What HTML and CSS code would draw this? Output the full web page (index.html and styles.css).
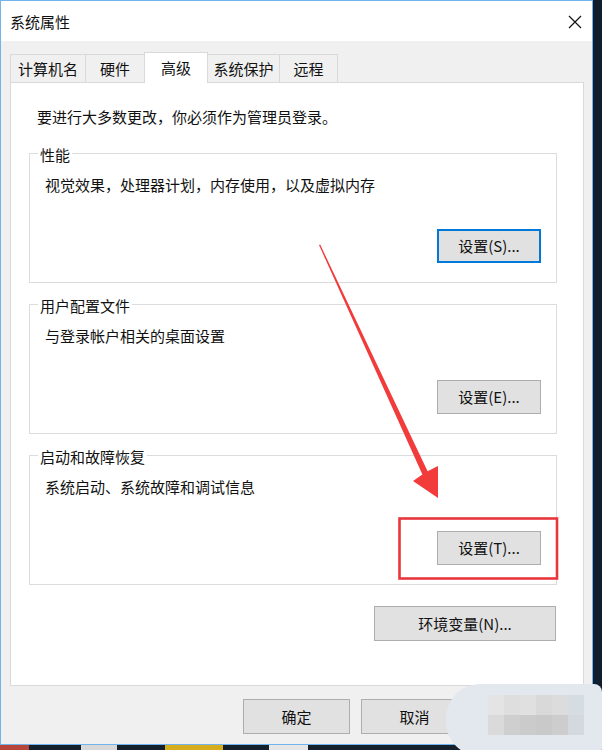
FILE: index.html
```html
<!DOCTYPE html>
<html lang="zh-CN">
<head>
<meta charset="utf-8">
<title>系统属性</title>
<link rel="stylesheet" href="styles.css">
</head>
<body>
<div class="screen">
  <div class="main">
    <div class="window">
      <div class="titlebar">
        <span class="title">系统属性</span>
        <svg class="close" width="14" height="14" viewBox="0 0 14 14"><path d="M1 1 L13 13 M13 1 L1 13" stroke="#111" stroke-width="1.2" fill="none"/></svg>
      </div>
      <div class="client">
        <div class="tabs">
          <div class="tab w1">计算机名</div>
          <div class="tab w2">硬件</div>
          <div class="tab w3 selected">高级</div>
          <div class="tab w4">系统保护</div>
          <div class="tab w5">远程</div>
        </div>
        <div class="panel">
          <p class="note">要进行大多数更改，你必须作为管理员登录。</p>
          <div class="group">
            <div class="legend">性能</div>
            <p class="desc">视觉效果，处理器计划，内存使用，以及虚拟内存</p>
            <div class="btn-row"><button class="btn focused">设置(S)...</button></div>
          </div>
          <div class="group">
            <div class="legend">用户配置文件</div>
            <p class="desc">与登录帐户相关的桌面设置</p>
            <div class="btn-row"><button class="btn">设置(E)...</button></div>
          </div>
          <div class="group">
            <div class="legend">启动和故障恢复</div>
            <p class="desc">系统启动、系统故障和调试信息</p>
            <div class="btn-row"><button class="btn">设置(T)...</button></div>
          </div>
          <div class="env-row"><button class="btn env">环境变量(N)...</button></div>
        </div>
        <div class="dialog-buttons">
          <button class="btn dlg">确定</button>
          <button class="btn dlg">取消</button>
          <button class="btn dlg">应用(A)</button>
        </div>
      </div>
    </div>
    <div class="edge"></div>
  </div>
  <div class="taskbar">
    <span class="tb red"></span>
    <span class="tb gap1"></span>
    <span class="tb white"></span>
    <span class="tb gap2"></span>
    <span class="tb yellow"></span>
    <span class="tb gap3"></span>
    <span class="tb white2"></span>
  </div>

  <div class="blob">
    <div class="mosaic">
      <span class="m1"></span><span class="m2"></span><span class="m3"></span><span class="m4"></span><span class="m5"></span><span class="m6"></span>
      <span class="m7"></span><span class="m8"></span><span class="m9"></span><span class="m10"></span><span class="m11"></span><span class="m12"></span>
    </div>
  </div>

  <svg class="annot" width="602" height="750" viewBox="0 0 602 750">
    <rect x="399.5" y="518.5" width="157.5" height="60" fill="none" stroke="#e8363c" stroke-width="2.6"/>
    <polygon points="319,245 320.2,244.6 427.6,471.3 438,466 438,498 413,481 422.4,474.6" fill="#f23c3c"/>
  </svg>
</div>
</body>
</html>
```

FILE: styles.css
```css
* { box-sizing: border-box; }
html, body { margin: 0; padding: 0; background: #0f1b28; }
body {
  font-family: "Microsoft YaHei", "Noto Sans CJK SC", "Noto Sans", sans-serif;
  color: #111;
  font-size: 15px;
}
.screen {
  position: relative;
  width: 602px;
  height: 750px;
  overflow: hidden;
  display: flex;
  flex-direction: column;
}
.main { display: flex; height: 745px; }
.window {
  width: 593px;
  height: 745px;
  border: 1px solid #71b3ea;
  display: flex;
  flex-direction: column;
  background: #f0f0f0;
}
.edge { flex: 1; background: #0f1d2c; }

.titlebar {
  height: 40px;
  background: #fff;
  display: flex;
  align-items: center;
  justify-content: space-between;
  padding: 1px 10px 0 9px;
}
.title { font-size: 15px; line-height: 20px; }
.close { display: block; }

.client {
  flex: 1;
  display: flex;
  flex-direction: column;
  padding: 11px 0 0 9px;
}
.tabs {
  display: flex;
  align-items: flex-end;
  height: 30px;
}
.tab {
  height: 28px;
  border: 1px solid #d9d9d9;
  border-bottom: none;
  margin-right: -1px;
  background: #f0f0f0;
  display: flex;
  align-items: center;
  justify-content: center;
  font-size: 15px;
  line-height: 20px;
  padding-top: 1px;
}
.tab.selected {
  height: 31px;
  background: #fff;
  margin-bottom: -1px;
  position: relative;
  z-index: 1;
  padding-top: 0;
  padding-bottom: 1px;
}
.w1 { width: 76px; }
.w2 { width: 60px; }
.w3 { width: 64px; }
.w4 { width: 73px; }
.w5 { width: 59px; }

.panel {
  width: 574px;
  height: 604px;
  background: #fff;
  border: 1px solid #d9d9d9;
  padding: 24px 26px 0 18px;
  display: flex;
  flex-direction: column;
}
.note {
  margin: 0 0 0 8px;
  line-height: 20px;
  font-size: 15px;
}
.group {
  margin-top: 21px;
  height: 130px;
  border: 1px solid #dcdcdc;
  padding: 0 15px 0 15px;
  display: flex;
  flex-direction: column;
}
.note + .group { margin-top: 26px; }
.legend {
  margin: -8px 0 0 -7px;
  padding: 0 2px;
  background: #fff;
  line-height: 18px;
  font-size: 15px;
  align-self: flex-start;
}
.desc {
  margin: 11px 0 0 0;
  line-height: 20px;
  font-size: 15px;
}
.btn-row {
  margin-top: 34px;
  display: flex;
  justify-content: flex-end;
}
.btn {
  font-family: "Microsoft YaHei", "Noto Sans CJK SC", "Noto Sans", sans-serif;
  font-size: 15px;
  color: #111;
  background: #e1e1e1;
  border: 1px solid #adadad;
  border-radius: 0;
  height: 34px;
  width: 104px;
  padding: 0;
  line-height: 20px;
}
.btn.focused { border: 2px solid #0078d7; }
.env-row {
  margin-top: 21px;
  display: flex;
  justify-content: flex-end;
  padding-right: 1px;
}
.btn.env { width: 182px; height: 35px; }

.dialog-buttons {
  display: flex;
  justify-content: flex-end;
  gap: 11px;
  margin-top: 13px;
  padding-right: 6px;
}
.btn.dlg { width: 107px; height: 35px; }

.taskbar {
  height: 5px;
  display: flex;
  background: #14202c;
}
.tb { display: block; height: 5px; }
.red { width: 29px; background: #b8453a; }
.gap1 { width: 52px; }
.white { width: 36px; background: #d8d8d8; }
.gap2 { width: 48px; }
.yellow { width: 58px; background: #d6ad1d; }
.gap3 { width: 46px; }
.white2 { width: 39px; background: #e6e6e6; }

.blob {
  position: absolute;
  left: 446px;
  top: 684px;
  width: 156px;
  height: 72px;
  border-radius: 34px 8px 8px 34px;
  background: #e2e8ed;
  padding: 11px 0 0 42px;
}
.mosaic {
  display: grid;
  grid-template-columns: repeat(6, 16px);
  grid-template-rows: 20px 20px;
}
.mosaic span { display: block; }
.m1 { background: #e4e4e4; }
.m2 { background: #dedede; }
.m3 { background: #e0e0e0; }
.m4 { background: #d9d9d9; }
.m5 { background: #dcdcdc; }
.m6 { background: #d6dde2; }
.m7 { background: #dadada; }
.m8 { background: #cfcfcf; }
.m9 { background: #cbcbcb; }
.m10 { background: #c9c9c9; }
.m11 { background: #cdcdcd; }
.m12 { background: #d3d9de; }

.annot {
  position: absolute;
  left: 0;
  top: 0;
  pointer-events: none;
}
```
